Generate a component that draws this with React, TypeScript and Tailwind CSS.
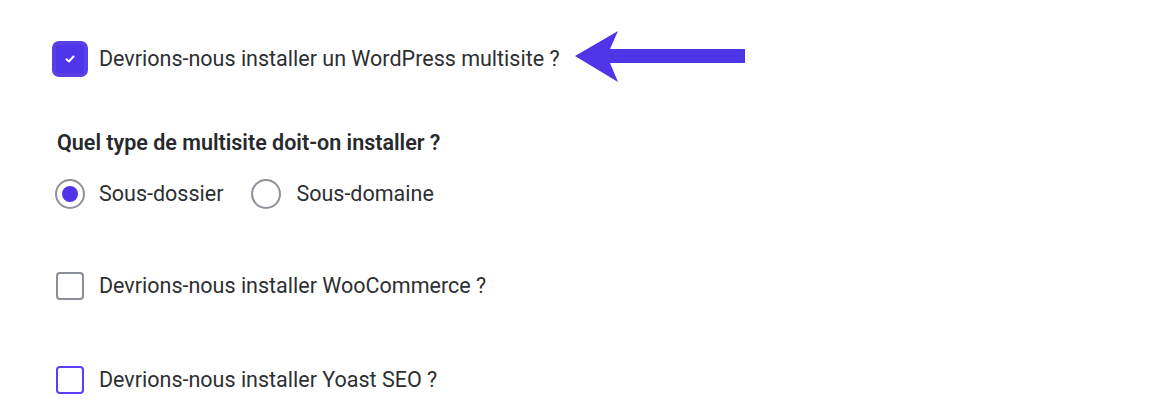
import React from 'react'

function CheckMark() {
  return (
    <svg width="10" height="8" viewBox="0 0 10 8" fill="none">
      <path d="M1.5 4.2 L4 6.5 L8.5 1.5" stroke="white" strokeWidth="2" strokeLinecap="round" strokeLinejoin="round" />
    </svg>
  )
}

export default function App() {
  return (
    <div className="relative w-[1156px] h-[418px] bg-white overflow-hidden font-['Roboto',sans-serif] text-[#2d2f33]">
      {/* annotation arrow */}
      <svg className="absolute left-[574px] top-[28px]" width="172" height="56" viewBox="0 0 172 56">
        <polygon points="1,28 44,3 36,21 171,21 171,35 36,35 44,54" fill="#4f35e8" />
      </svg>

      <div className="flex flex-col pl-[52px] pt-[41px]">
        <label className="flex items-center gap-[11px]">
          <span className="w-9 h-9 rounded-[7px] bg-[#4f35e8] border-4 border-[#5840e6] flex items-center justify-center">
            <CheckMark />
          </span>
          <span className="text-[21.5px] leading-7">Devrions-nous installer un WordPress multisite ?</span>
        </label>

        <h3 className="mt-[52px] pl-[5px] text-[21.5px] leading-7 font-semibold text-[#27292d]">
          Quel type de multisite doit-on installer ?
        </h3>

        <div className="mt-[22px] pl-[3px] flex items-center">
          <label className="flex items-center gap-[14px]">
            <span className="w-[30px] h-[30px] rounded-full border-2 border-[#8e9199] flex items-center justify-center">
              <span className="w-4 h-4 rounded-full bg-[#4f35e8]" />
            </span>
            <span className="text-[21.5px] leading-7">Sous-dossier</span>
          </label>
          <label className="flex items-center gap-[15px] ml-[28px]">
            <span className="w-[30px] h-[30px] rounded-full border-2 border-[#8e9199]" />
            <span className="text-[21.5px] leading-7">Sous-domaine</span>
          </label>
        </div>

        <label className="mt-[63px] pl-1 flex items-center gap-[15px]">
          <span className="w-7 h-7 rounded-[4px] border-2 border-[#8b8f99]" />
          <span className="text-[21.5px] leading-7">Devrions-nous installer WooCommerce ?</span>
        </label>

        <label className="mt-[66px] pl-1 flex items-center gap-[15px]">
          <span className="w-7 h-7 rounded-[4px] border-2 border-[#5b3ef5]" />
          <span className="text-[21.5px] leading-7">Devrions-nous installer Yoast SEO ?</span>
        </label>
      </div>
    </div>
  )
}
